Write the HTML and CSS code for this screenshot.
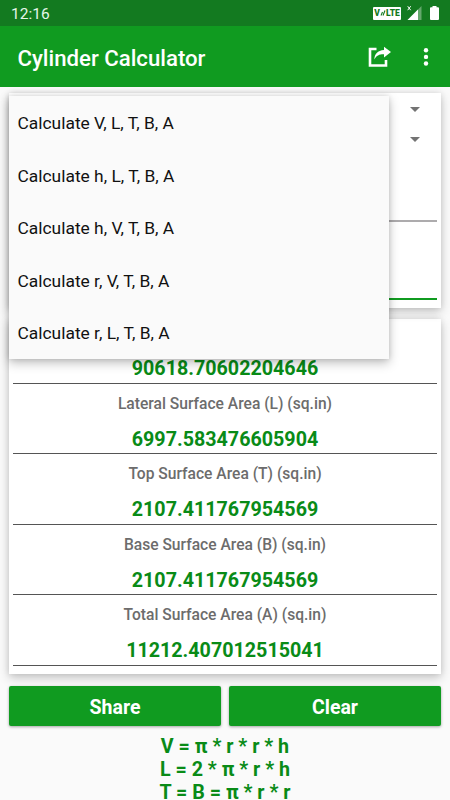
FILE: index.html
```html
<!DOCTYPE html>
<html lang="en">
<head>
    <meta charset="UTF-8">
    <meta name="viewport" content="width=device-width, initial-scale=1.0">
    <title>Cylinder Calculator</title>
    <link rel="stylesheet" href="styles.css">
</head>
<body>
    <div class="status-bar">
        <span class="clock">12:16</span>
        <div class="status-icons">
            <span class="volte"><span>V</span><svg width="6" height="8" viewBox="0 0 6 8"><path d="M1 6.5 2.5 3M3 6.5 5 1.5" stroke="#137a20" stroke-width="1.1" fill="none"/></svg><span>LTE</span></span>
            <svg class="signal" width="15" height="16" viewBox="0 0 15 16">
                <path d="M14.5 1v14H.5z" fill="#fff" opacity=".35"/>
                <path d="M11 4.5V15H.5z" fill="#fff"/>
                <path d="M.7 1.2l3 4M3.7 1.2l-3 4" stroke="#fff" stroke-width="1"/>
            </svg>
            <svg class="battery" width="9" height="14" viewBox="0 0 9 14">
                <path d="M2.5 0h4v1.3H8q1 0 1 1V13q0 1-1 1H1q-1 0-1-1V2.3q0-1 1-1h1.5z" fill="#fff"/>
            </svg>
        </div>
    </div>

    <header class="app-bar">
        <h1>Cylinder Calculator</h1>
        <svg class="share-icon" width="24" height="22" viewBox="0 0 24 22">
            <path d="M8.5 3H2v16.5h16V14" fill="none" stroke="#fff" stroke-width="2.6"/>
            <path d="M16 .8 23 6l-7 5.4V8.2c-4.500-.1-7.500 1.100-9.700 5.300C6.500 8 9.500 4.300 16 3.900z" fill="#fff"/>
        </svg>
        <svg class="more-icon" width="6" height="20" viewBox="0 0 6 20">
            <circle cx="3" cy="3.200" r="2.200" fill="#fff"/>
            <circle cx="3" cy="9.900" r="2.200" fill="#fff"/>
            <circle cx="3" cy="16.500" r="2.200" fill="#fff"/>
        </svg>
    </header>

    <main>
        <section class="card inputs">
            <div class="spinner"></div>
            <div class="spinner"></div>
            <div class="field"></div>
            <div class="field focused"></div>

            <ul class="dropdown">
                <li>Calculate V, L, T, B, A</li>
                <li>Calculate h, L, T, B, A</li>
                <li>Calculate h, V, T, B, A</li>
                <li>Calculate r, V, T, B, A</li>
                <li>Calculate r, L, T, B, A</li>
            </ul>
        </section>

        <section class="card results">
            <div class="result first">
                <div class="value">90618.70602204646</div>
            </div>
            <div class="result">
                <div class="label">Lateral Surface Area (L) (sq.in)</div>
                <div class="value">6997.583476605904</div>
            </div>
            <div class="result">
                <div class="label">Top Surface Area (T) (sq.in)</div>
                <div class="value">2107.411767954569</div>
            </div>
            <div class="result">
                <div class="label">Base Surface Area (B) (sq.in)</div>
                <div class="value">2107.411767954569</div>
            </div>
            <div class="result">
                <div class="label">Total Surface Area (A) (sq.in)</div>
                <div class="value">11212.407012515041</div>
            </div>
        </section>

        <div class="buttons">
            <button type="button">Share</button>
            <button type="button">Clear</button>
        </div>

        <div class="formulas">
            <div>V = π * r * r * h</div>
            <div>L = 2 * π * r * h</div>
            <div>T = B = π * r * r</div>
        </div>
    </main>
</body>
</html>
```

FILE: styles.css
```css
* {
    box-sizing: border-box;
}

body {
    margin: 0;
    height: 800px;
    overflow: hidden;
    background-color: #fafafa;
    font-family: Roboto, "Liberation Sans", sans-serif;
}

/* Top bars */
.status-bar {
    display: flex;
    align-items: center;
    justify-content: space-between;
    height: 26px;
    padding: 0 11px;
    background-color: #137a20;
    color: #e6f5e8;
}

.clock {
    font-size: 15.5px;
    padding-top: 2px;
}

.status-icons {
    display: flex;
    align-items: center;
}

.volte {
    display: flex;
    align-items: center;
    justify-content: center;
    width: 28px;
    height: 13px;
    border-radius: 1px;
    background-color: #fff;
    color: #137a20;
    font-size: 8.5px;
    font-weight: 900;
}

.signal {
    margin: 0 8px 0 6px;
}

.app-bar {
    display: flex;
    align-items: center;
    height: 61px;
    padding: 0 21px 0 17.5px;
    background-color: #109b20;
    color: #fff;
}

.app-bar h1 {
    flex: 1;
    margin: 0;
    padding-top: 2px;
    font-size: 22.2px;
    font-weight: 500;
}

.share-icon {
    margin-right: 31px;
}

/* Cards */
main {
    padding: 6px 9px 0;
}

.card {
    background-color: #fff;
    box-shadow: 0 4px 10px rgba(0, 0, 0, 0.2), 0 0 6px rgba(0, 0, 0, 0.1);
}

.inputs {
    position: relative;
    height: 215px;
    padding: 1px 4px 0;
}

.spinner {
    display: flex;
    align-items: center;
    justify-content: flex-end;
    height: 30px;
    padding-right: 17px;
}

.spinner::after {
    content: "";
    border: 5.5px solid transparent;
    border-top-color: #737373;
    border-bottom: 0;
}

.field {
    height: 68px;
    border-bottom: 2px solid #adabad;
}

.field.focused {
    height: 78px;
    border-bottom-color: #109b20;
}

/* Open list over the first card */
.dropdown {
    position: absolute;
    z-index: 1;
    top: 3px;
    left: 0;
    width: 380px;
    margin: 0;
    padding: 0;
    list-style: none;
    background-color: #fafafa;
    box-shadow: 0 4px 10px rgba(0, 0, 0, 0.25), 0 0 5px rgba(0, 0, 0, 0.12);
}

.dropdown li {
    height: 52.6px;
    padding: 1px 8.5px 0;
    font-size: 17.4px;
    line-height: 52.6px;
    color: #111;
}

.results {
    height: 355px;
    margin-top: 11px;
    padding: 0 4px;
}

.result {
    height: 70.4px;
    padding-top: 10px;
    border-bottom: 1px solid #555;
    text-align: center;
}

.result.first {
    height: 65px;
    padding-top: 39px;
}

.label {
    height: 20px;
    margin-bottom: 15px;
    font-size: 15.6px;
    font-weight: 500;
    line-height: 20px;
    color: #6c6c6c;
}

.value {
    height: 22px;
    font-size: 19.7px;
    font-weight: 700;
    line-height: 22px;
    color: #098b17;
}

/* Actions */
.buttons {
    display: grid;
    grid-template-columns: 1fr 1fr;
    gap: 8px;
    margin-top: 12px;
}

.buttons button {
    height: 40px;
    padding: 2px 0 0;
    border: 0;
    border-radius: 2px;
    background-color: #109b20;
    box-shadow: 0 1px 3px rgba(0, 0, 0, 0.35);
    color: #fff;
    font: 700 19.5px Roboto, "Liberation Sans", sans-serif;
}

.formulas {
    margin-top: 9px;
    font-size: 19.7px;
    font-weight: 700;
    line-height: 23px;
    text-align: center;
    color: #098b17;
}
```
